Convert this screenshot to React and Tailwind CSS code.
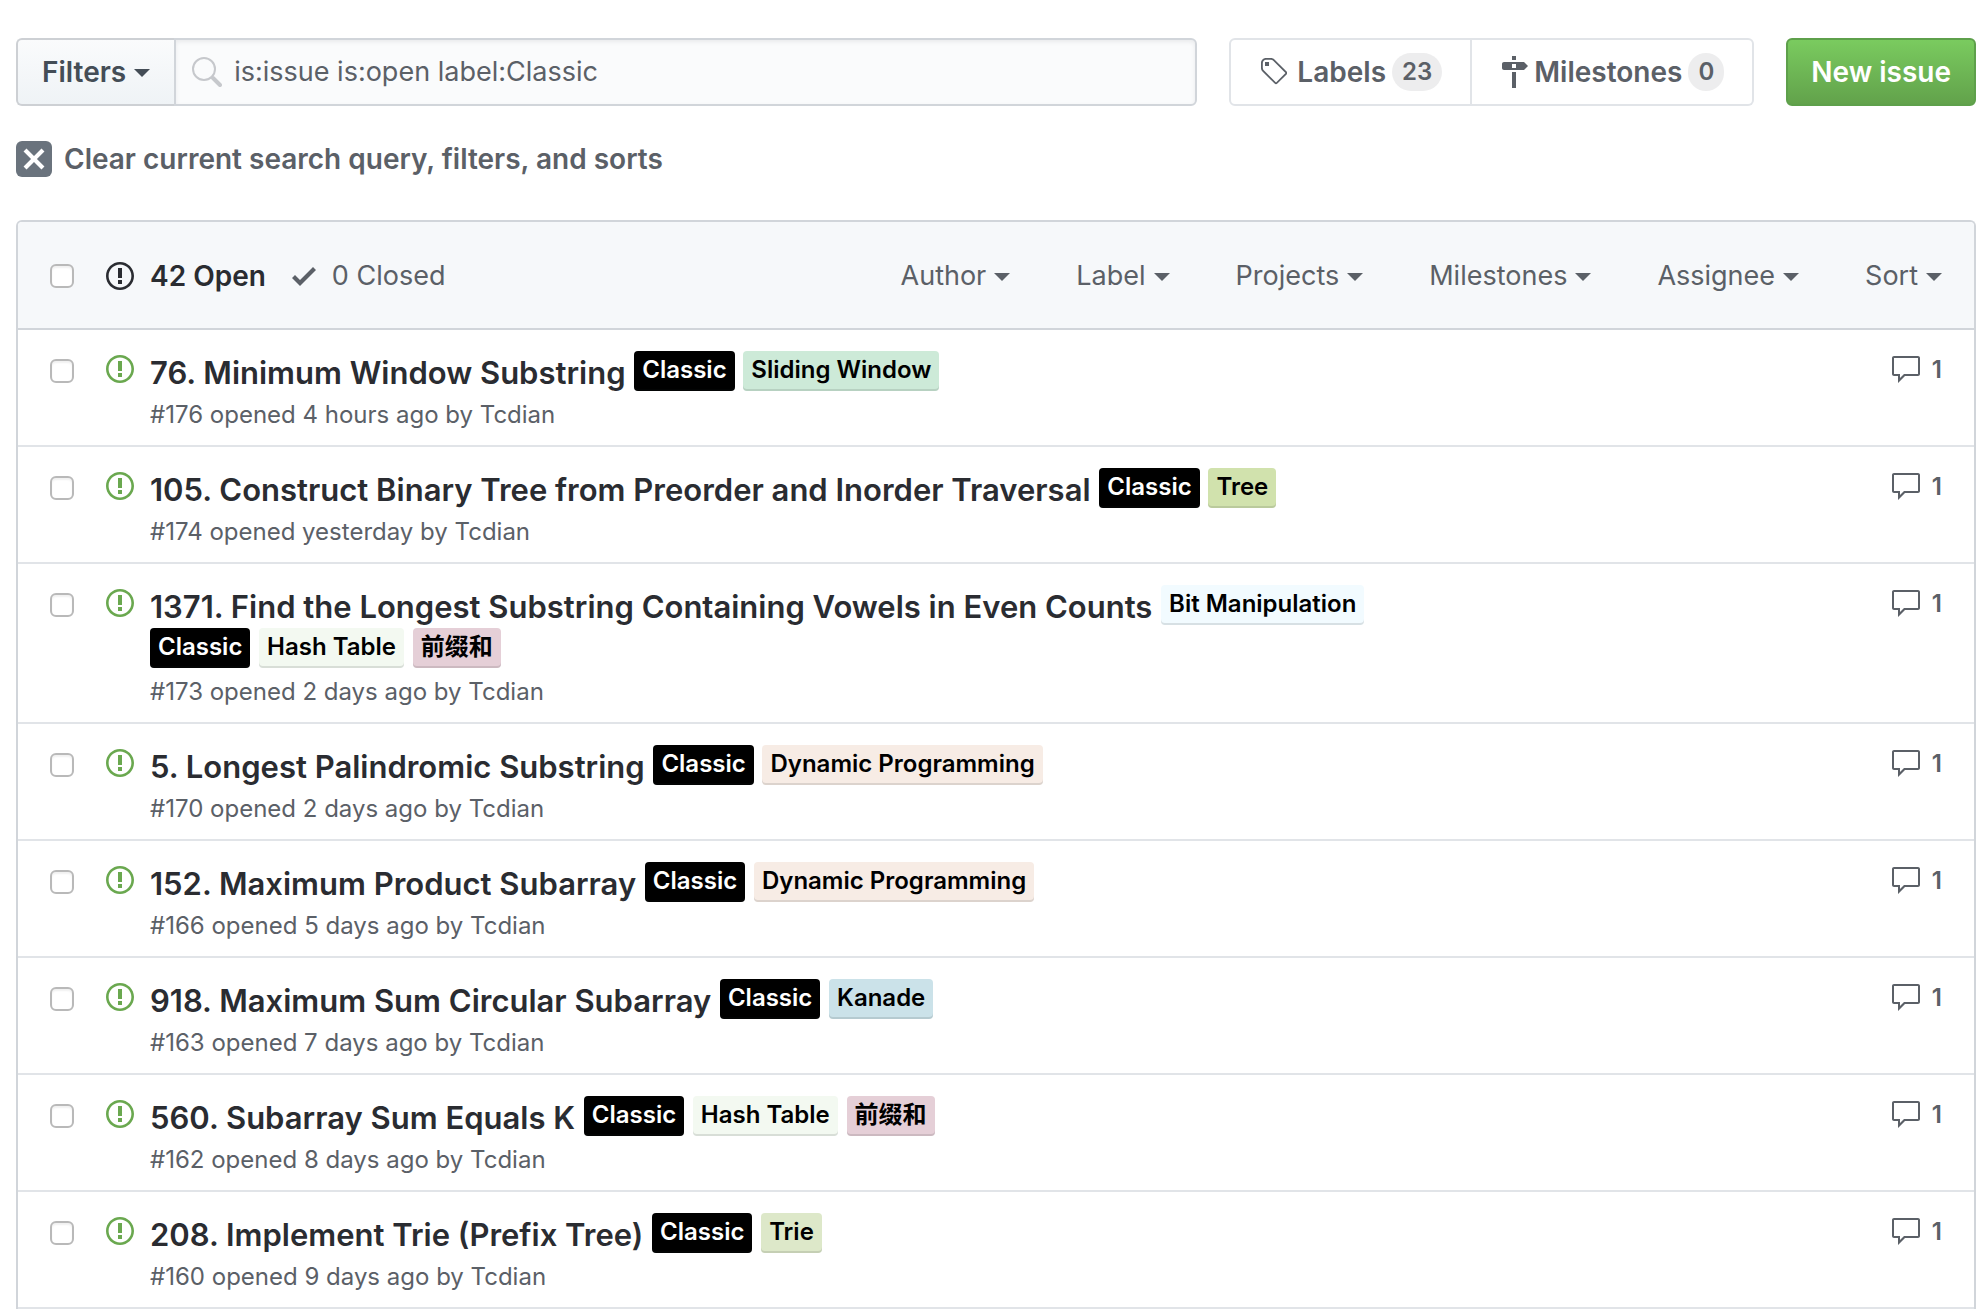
const ICONS = {
  issue: {
    box: "0 0 14 16",
    d: "M7 2.3c3.14 0 5.7 2.56 5.7 5.7s-2.56 5.7-5.7 5.7A5.71 5.71 0 011.3 8c0-3.14 2.56-5.7 5.7-5.7zM7 1C3.14 1 0 4.14 0 8s3.14 7 7 7 7-3.14 7-7-3.14-7-7-7zm1 3H6v5h2V4zm0 6H6v2h2v-2z",
  },
  check: { box: "0 0 12 16", d: "M12 5l-8 8-4-4 1.5-1.5L4 10l6.5-6.5L12 5z" },
  comment: {
    box: "0 0 16 16",
    d: "M14 1H2c-.55 0-1 .45-1 1v8c0 .55.45 1 1 1h2v3.5L7.5 11H14c.55 0 1-.45 1-1V2c0-.55-.45-1-1-1zm0 9H7l-2 2v-2H2V2h12v8z",
  },
  tag: {
    box: "0 0 14 16",
    d: "M7.73 1.73C7.26 1.26 6.62 1 5.96 1H3.5C2.13 1 1 2.13 1 3.5v2.47c0 .66.27 1.3.73 1.77l6.06 6.06c.39.39 1.02.39 1.41 0l4.59-4.59a.996.996 0 000-1.41L7.73 1.73zM2.38 7.09c-.31-.3-.47-.7-.47-1.13V3.5c0-.88.72-1.59 1.59-1.59h2.47c.42 0 .83.16 1.13.47l6.14 6.13-4.73 4.73-6.13-6.15zM3.01 3h2v2H3V3h.01z",
  },
  milestone: {
    box: "0 0 14 16",
    d: "M8 2H6V0h2v2zm4 5H2c-.55 0-1-.45-1-1V4c0-.55.45-1 1-1h10l2 2-2 2zM8 4H6v2h2V4zM6 16h2V8H6v8z",
  },
  x: {
    box: "0 0 12 16",
    d: "M7.48 8l3.75 3.75-1.48 1.48L6 9.48l-3.75 3.75-1.48-1.48L4.52 8 .77 4.25l1.48-1.48L6 6.52l3.75-3.75 1.48 1.48L7.48 8z",
  },
};

function Icon({ name, className }) {
  const { box, d } = ICONS[name];
  return (
    <svg viewBox={box} className={className} fill="currentColor" aria-hidden="true">
      <path fillRule="evenodd" d={d} />
    </svg>
  );
}

function Caret() {
  return (
    <svg viewBox="0 0 16 8" className="mt-0.5 h-2 w-4 shrink-0" fill="currentColor" aria-hidden="true">
      <path d="M0 0h16L8 8z" />
    </svg>
  );
}

function Check({ label }) {
  return (
    <input
      type="checkbox"
      aria-label={label}
      className="block size-6 shrink-0 appearance-none rounded-md border-2 border-[#b9b9b9] bg-white shadow-[inset_0_2px_2px_rgba(0,0,0,0.06)] checked:bg-[#0366d6]"
    />
  );
}

const LABELS = {
  Classic: "bg-black text-white",
  "Sliding Window": "bg-[#cdead8] text-black",
  Tree: "bg-[#d1e2ad] text-black",
  "Bit Manipulation": "bg-[#f2fbff] text-black",
  "Hash Table": "bg-[#f3f9f1] text-black",
  前缀和: "bg-[#e5cfd7] text-black",
  "Dynamic Programming": "bg-[#f7ece5] text-black",
  Kanade: "bg-[#cbe2e9] text-black",
  Trie: "bg-[#dde8c9] text-black",
};

const ISSUES = [
  { title: "76. Minimum Window Substring", labels: ["Classic", "Sliding Window"], meta: "#176 opened 4 hours ago by" },
  { title: "105. Construct Binary Tree from Preorder and Inorder Traversal", labels: ["Classic", "Tree"], meta: "#174 opened yesterday by" },
  { title: "1371. Find the Longest Substring Containing Vowels in Even Counts", labels: ["Bit Manipulation", "Classic", "Hash Table", "前缀和"], meta: "#173 opened 2 days ago by" },
  { title: "5. Longest Palindromic Substring", labels: ["Classic", "Dynamic Programming"], meta: "#170 opened 2 days ago by" },
  { title: "152. Maximum Product Subarray", labels: ["Classic", "Dynamic Programming"], meta: "#166 opened 5 days ago by" },
  { title: "918. Maximum Sum Circular Subarray", labels: ["Classic", "Kanade"], meta: "#163 opened 7 days ago by" },
  { title: "560. Subarray Sum Equals K", labels: ["Classic", "Hash Table", "前缀和"], meta: "#162 opened 8 days ago by" },
  { title: "208. Implement Trie (Prefix Tree)", labels: ["Classic", "Trie"], meta: "#160 opened 9 days ago by" },
];

function IssueRow({ issue }) {
  return (
    <li className="flex items-start border-b-2 border-[#e1e4e8] px-8">
      <div className="pt-[29px]">
        <Check label={issue.title} />
      </div>
      <Icon name="issue" className="mt-[23px] ml-8 h-8 w-7 shrink-0 text-[#6aa84f]" />
      <div className="w-2/3 pt-[21px] pb-[15px] pl-4">
        <div className="text-[31px] leading-[43px]">
          <a href="#issue" className="font-semibold text-[#2a2c31]">
            {issue.title}
          </a>
          {issue.labels.map((name) => (
            <span key={name}>
              {" "}
              <a
                href="#label"
                className={`inline-block h-10 rounded-sm px-2 align-top text-2xl leading-[38px] font-semibold shadow-[inset_0_-2px_0_rgba(27,31,35,0.12)] ${LABELS[name]}`}
              >
                {name}
              </a>
            </span>
          ))}
        </div>
        <p className="mt-1.5 text-2xl leading-[30px] text-[#5b6067]">
          {issue.meta} <a href="#author">Tcdian</a>
        </p>
      </div>
      <a href="#comments" className="mt-6 ml-auto flex h-8 items-center gap-2.5 text-2xl font-semibold text-[#5b6067]" aria-label="1 comment">
        <Icon name="comment" className="size-8" />
        1
      </a>
    </li>
  );
}

const MENUS = ["Author", "Label", "Projects", "Milestones", "Assignee", "Sort"];

export default function App() {
  return (
    <main className="bg-white pt-[38px] pr-[10px] pl-4 font-['Inter','Noto_Sans_CJK_SC',sans-serif] text-[28px] text-[#5b6067]">
      <div className="flex h-[68px] items-stretch gap-8">
        <form className="flex flex-1" onSubmit={(e) => e.preventDefault()}>
          <button
            type="button"
            className="flex items-center gap-2 rounded-l-md border-2 border-r-0 border-[#cdd0d4] bg-linear-to-b from-[#fafbfc] to-[#eff3f6] px-6 font-semibold text-[#444d56]"
          >
            Filters
            <Caret />
          </button>
          <label className="flex flex-1 items-center gap-3 rounded-r-md border-2 border-[#d1d5da] bg-[#fafbfc] pl-4 shadow-[inset_0_2px_4px_rgba(27,31,35,0.075)]">
            <svg viewBox="0 0 30 30" className="size-[30px] shrink-0" fill="none" stroke="#c6c8cc" aria-hidden="true">
              <circle cx="12" cy="12" r="11" strokeWidth="2" />
              <path d="M21 21l7 7" strokeWidth="4" strokeLinecap="round" />
            </svg>
            <input
              type="text"
              aria-label="Search all issues"
              defaultValue="is:issue is:open label:Classic"
              className="w-full min-w-0 bg-transparent text-[27px] outline-none"
            />
          </label>
        </form>
        <nav className="flex font-semibold">
          <a href="#labels" className="flex items-center rounded-l-md border-2 border-[#e1e4e8] px-7">
            <Icon name="tag" className="mr-2.5 h-8 w-7" />
            Labels
            <span className="ml-1.5 rounded-full bg-[#ededee] px-2.5 text-2xl leading-[38px]">23</span>
          </a>
          <a href="#milestones" className="flex items-center rounded-r-md border-2 border-l-0 border-[#e1e4e8] px-7">
            <Icon name="milestone" className="mr-1.5 h-8 w-7" />
            Milestones
            <span className="ml-1.5 rounded-full bg-[#ededee] px-2.5 text-2xl leading-[38px]">0</span>
          </a>
        </nav>
        <a
          href="#new"
          className="flex items-center rounded-md border-2 border-[#5ea04b] bg-linear-to-b from-[#7acb5f] to-[#62a24b] px-[23px] font-semibold text-white"
        >
          New issue
        </a>
      </div>

      <a href="#clear" className="mt-8 flex items-center gap-3 font-semibold">
        <span className="flex size-9 items-center justify-center rounded-md bg-[#6a737d] text-white">
          <Icon name="x" className="h-8 w-6" />
        </span>
        Clear current search query, filters, and sorts
      </a>

      <section className="mt-10 rounded-t-md border-2 border-b-0 border-[#d1d5da]">
        <header className="flex h-[108px] items-center rounded-t-sm border-b-2 border-[#d1d5da] bg-[#f6f8fa] px-8 pt-0.5">
          <Check label="Select all issues" />
          <a href="#open" className="ml-8 flex items-center gap-4 font-semibold text-[#2a2c31]">
            <Icon name="issue" className="h-8 w-7" />
            42 Open
          </a>
          <a href="#closed" className="ml-[26px] flex items-center gap-4 text-[27px]">
            <Icon name="check" className="h-8 w-6" />
            0 Closed
          </a>
          <div className="ml-auto flex gap-[66px] text-[27px]">
            {MENUS.map((name) => (
              <button key={name} type="button" className="flex items-center gap-2">
                {name}
                <Caret />
              </button>
            ))}
          </div>
        </header>
        <ul>
          {ISSUES.map((issue) => (
            <IssueRow key={issue.title} issue={issue} />
          ))}
        </ul>
      </section>
    </main>
  );
}
